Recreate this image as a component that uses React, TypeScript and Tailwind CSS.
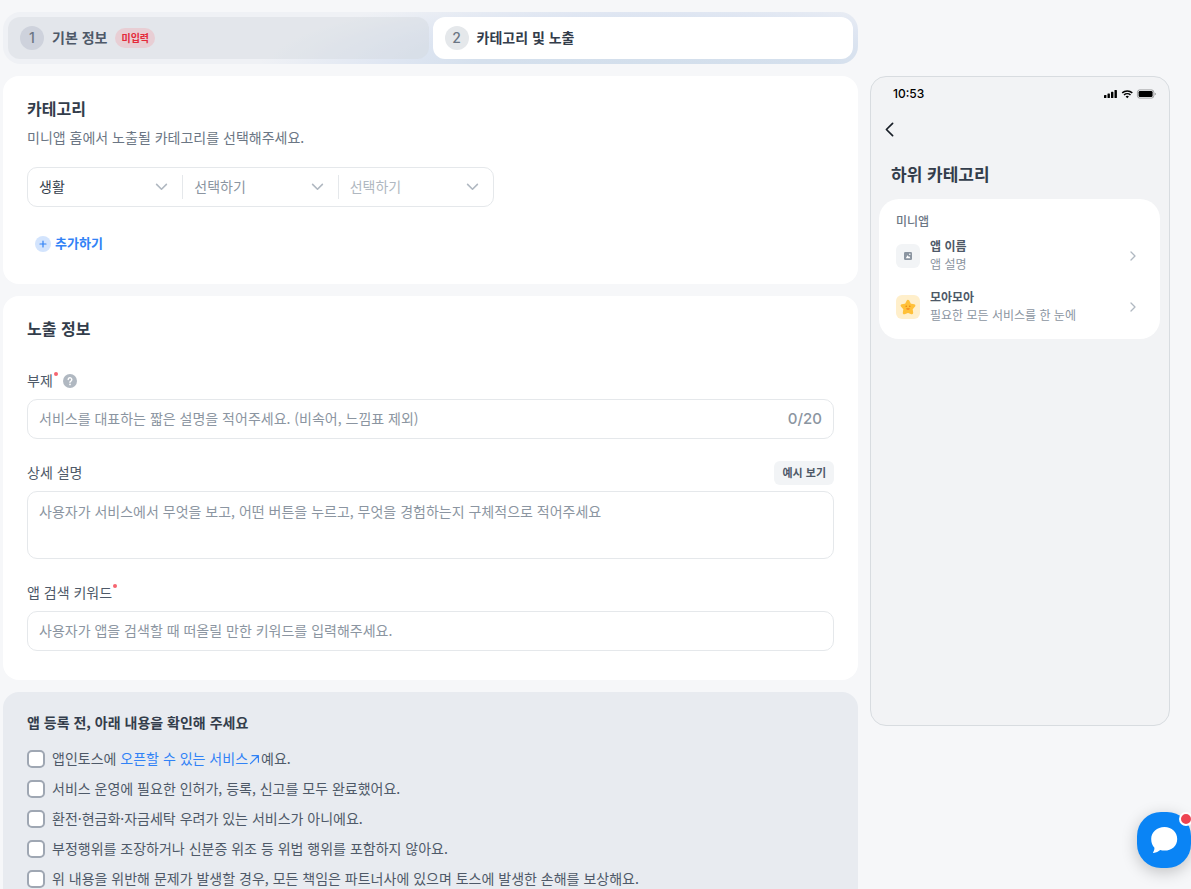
import React, { useState } from "react";

const CHECKS = [
  "서비스 운영에 필요한 인허가, 등록, 신고를 모두 완료했어요.",
  "환전·현금화·자금세탁 우려가 있는 서비스가 아니에요.",
  "부정행위를 조장하거나 신분증 위조 등 위법 행위를 포함하지 않아요.",
  "위 내용을 위반해 문제가 발생할 경우, 모든 책임은 파트너사에 있으며 토스에 발생한 손해를 보상해요.",
];

function StepTabs() {
  return (
    <nav className="flex gap-1 overflow-hidden rounded-[18px] bg-[#eff1f5] bg-[radial-gradient(ellipse_46%_150%_at_76%_105%,#d3dfec_0%,#d5e0ed_45%,#dfe6f2_68%,transparent_100%)] p-[5px]">
      <button type="button" className="flex h-[42px] flex-1 items-center gap-2 rounded-xl bg-[#d1d6db]/40 px-3">
        <span className="flex size-6 items-center justify-center rounded-full bg-[#ced2dc] font-[Inter] text-sm font-medium text-[#6b7684]">1</span>
        <span className="pb-[2px] text-sm font-bold text-[#4e5968]">기본 정보</span>
        <span className="rounded-full bg-[#e8ced4] px-[6px] text-[10px] leading-5 font-bold text-[#e42939]">미입력</span>
      </button>
      <button type="button" className="flex h-[42px] flex-1 items-center gap-2 rounded-xl bg-white px-3">
        <span className="flex size-6 items-center justify-center rounded-full bg-[#e5e8eb] font-[Inter] text-sm font-medium text-[#6b7684]">2</span>
        <span className="pb-[2px] text-sm font-bold text-[#333d4b]">카테고리 및 노출</span>
      </button>
    </nav>
  );
}

function CategorySelect({ label, options, disabled }: { label: string; options: string[]; disabled?: boolean }) {
  return (
    <div className="relative flex-1">
      <select
        aria-label={label}
        disabled={disabled}
        className={`h-[38px] w-full appearance-none bg-transparent px-[11px] pb-[2px] text-sm outline-none ${
          disabled ? "text-[#b0b8c1] opacity-100" : options[0] === "선택하기" ? "text-[#8b95a1]" : "text-[#333d4b]"
        }`}
      >
        {options.map((o) => (
          <option key={o}>{o}</option>
        ))}
      </select>
      <svg className="pointer-events-none absolute top-[15px] right-[14px]" width="13" height="8" viewBox="0 0 13 8" fill="none">
        <path d="M1.6 1.4 6.5 6.200l4.900-4.800" stroke="#b0b8c1" strokeWidth="1.6" strokeLinecap="round" strokeLinejoin="round" />
      </svg>
    </div>
  );
}

function CategoryCard() {
  return (
    <section className="rounded-2xl bg-white px-6 pt-5 pb-6">
      <h2 className="text-base leading-6 font-bold text-[#333d4b]">카테고리</h2>
      <p className="mt-[5px] text-sm leading-6 text-[#6b7684]">미니앱 홈에서 노출될 카테고리를 선택해주세요.</p>
      <div className="mt-[18px] flex w-[467px] max-w-full items-center rounded-[10px] border border-[#e5e8eb]">
        <CategorySelect label="대분류" options={["생활"]} />
        <span className="h-6 w-px bg-[#e5e8eb]" />
        <CategorySelect label="중분류" options={["선택하기"]} />
        <span className="h-6 w-px bg-[#e5e8eb]" />
        <CategorySelect label="소분류" options={["선택하기"]} disabled />
      </div>
      <button type="button" className="mt-[21px] flex h-8 items-center gap-1 px-2 text-[13px] font-bold text-[#3182f6]">
        <svg width="16" height="16" viewBox="0 0 16 16" fill="none">
          <circle cx="8" cy="8" r="8" fill="#d3e4fd" />
          <path d="M8 5v6M5 8h6" stroke="#3182f6" strokeWidth="1.2" strokeLinecap="round" />
        </svg>
        <span className="pb-[2px]">추가하기</span>
      </button>
    </section>
  );
}

function RequiredDot() {
  return <span className="mb-3 ml-px size-1 rounded-full bg-[#f66570]" />;
}

function ExposureCard() {
  const [subtitle, setSubtitle] = useState("");
  return (
    <section className="rounded-2xl bg-white px-6 pt-5 pb-[29px]">
      <h2 className="text-base leading-6 font-bold text-[#333d4b]">노출 정보</h2>

      <div className="mt-[29px] flex h-6 items-center">
        <label htmlFor="subtitle" className="flex items-center pb-[2px] text-sm text-[#4e5968]">
          부제
          <RequiredDot />
        </label>
        <button type="button" aria-label="부제 도움말" className="ml-[5px]">
          <svg width="14" height="14" viewBox="0 0 14 14" fill="none">
            <circle cx="7" cy="7" r="7" fill="#b0b8c1" />
            <path d="M5.2 5.5a1.8 1.8 0 1 1 2.7 1.6c-.6.3-.9.6-.9 1.1" stroke="#fff" strokeWidth="1.4" strokeLinecap="round" />
            <circle cx="7" cy="10.4" r=".85" fill="#fff" />
          </svg>
        </button>
      </div>
      <div className="mt-[6px] flex h-10 items-center rounded-[10px] border border-[#e5e8eb] px-[11px]">
        <input
          id="subtitle"
          maxLength={20}
          value={subtitle}
          onChange={(e) => setSubtitle(e.target.value)}
          placeholder="서비스를 대표하는 짧은 설명을 적어주세요. (비속어, 느낌표 제외)"
          className="min-w-0 flex-1 pb-[2px] text-sm text-[#333d4b] outline-none placeholder:text-[#8b95a1]"
        />
        <span className="font-[Inter] text-[15px] font-medium text-[#8b95a1]">{subtitle.length}/20</span>
      </div>

      <div className="mt-[22px] flex h-6 items-center justify-between">
        <label htmlFor="detail" className="pb-[2px] text-sm text-[#4e5968]">상세 설명</label>
        <button type="button" className="h-6 rounded-md bg-[#f2f4f6] px-2 pb-px text-[11px] font-bold text-[#4e5968]">예시 보기</button>
      </div>
      <textarea
        id="detail"
        placeholder="사용자가 서비스에서 무엇을 보고, 어떤 버튼을 누르고, 무엇을 경험하는지 구체적으로 적어주세요"
        className="mt-[6px] block h-[68px] w-full resize-none rounded-[10px] border border-[#e5e8eb] px-[11px] py-2 text-sm leading-[22px] text-[#333d4b] outline-none placeholder:text-[#8b95a1]"
      />

      <label htmlFor="keyword" className="mt-[22px] flex h-6 items-center pb-[2px] text-sm text-[#4e5968]">
        앱 검색 키워드
        <RequiredDot />
      </label>
      <input
        id="keyword"
        placeholder="사용자가 앱을 검색할 때 떠올릴 만한 키워드를 입력해주세요."
        className="mt-[6px] block h-10 w-full rounded-[10px] border border-[#e5e8eb] px-[11px] pb-[2px] text-sm text-[#333d4b] outline-none placeholder:text-[#8b95a1]"
      />
    </section>
  );
}

const boxClass =
  "size-[18px] shrink-0 appearance-none rounded-[5px] border-2 border-[#9fa7b3] bg-white checked:border-[#3182f6] checked:bg-[#3182f6]";

function ConfirmCard() {
  return (
    <section className="rounded-2xl bg-[#e8ebf0] px-6 pt-[18px] pb-6">
      <h2 className="text-sm leading-6 font-bold text-[#333d4b]">앱 등록 전, 아래 내용을 확인해 주세요</h2>
      <ul className="mt-[10px] text-sm text-[#4e5968]">
        <li className="flex h-[30px] items-center gap-[7px]">
          <input id="check-open" type="checkbox" className={boxClass} />
          <label htmlFor="check-open" className="pb-[2px]">
            앱인토스에{" "}
            <a href="#services" className="text-[#3182f6]">
              오픈할 수 있는 서비스
              <svg className="mx-px inline align-[-1px]" width="11" height="11" viewBox="0 0 11 11" fill="none">
                <path d="M1.5 9.7 9 2M3 1.7h6.4v6.5" stroke="#3182f6" strokeWidth="1.2" strokeLinecap="round" strokeLinejoin="round" />
              </svg>
            </a>
            예요.
          </label>
        </li>
        {CHECKS.map((text, i) => (
          <li key={text} className="flex h-[30px] items-center gap-[7px]">
            <input id={`check-${i}`} type="checkbox" className={boxClass} />
            <label htmlFor={`check-${i}`} className="pb-[2px]">{text}</label>
          </li>
        ))}
      </ul>
    </section>
  );
}

function StatusIcons() {
  return (
    <svg width="52" height="10" viewBox="0 0 52 10" fill="none">
      <rect x="0" y="6" width="2.4" height="3" rx=".6" fill="#000" />
      <rect x="3.5" y="4.5" width="2.400" height="4.5" rx=".6" fill="#000" />
      <rect x="7" y="2.800" width="2.4" height="6.2" rx=".6" fill="#000" />
      <rect x="10.5" y="1" width="2.400" height="8" rx=".6" fill="#000" />
      <path d="M18.2 3.900a7.4 7.4 0 0 1 10.1 0M20 6a4.8 4.8 0 0 1 6.5 0" stroke="#000" strokeWidth="1.5" />
      <path d="M21.6 7.500a2.5 2.5 0 0 1 3.3 0L23.250 9.200z" fill="#000" />
      <rect x="33.400" y=".9" width="16.400" height="8.200" rx="2.300" stroke="#000" strokeOpacity=".4" strokeWidth=".8" />
      <rect x="34.600" y="2" width="14" height="6" rx="1.300" fill="#000" />
      <path d="M50.800 3.800v2.400q.9-.4.9-1.200t-.9-1.200" fill="#000" fillOpacity=".5" />
    </svg>
  );
}

function AppRow({ icon, name, desc }: { icon: React.ReactNode; name: string; desc: string }) {
  return (
    <li className="flex items-center gap-[10px]">
      {icon}
      <div className="min-w-0 flex-1 pb-[2px] text-xs leading-[18px]">
        <p className="font-bold text-[#4e5968]">{name}</p>
        <p className="text-[#8b95a1]">{desc}</p>
      </div>
      <svg className="mr-2" width="6" height="10" viewBox="0 0 6 10" fill="none">
        <path d="m1 1 4 4-4 4" stroke="#b0b8c1" strokeWidth="1.3" strokeLinecap="round" strokeLinejoin="round" />
      </svg>
    </li>
  );
}

function PhonePreview() {
  return (
    <aside className="mt-16 aspect-[6/13] w-[300px] shrink-0 rounded-2xl border border-[#d8dce0] bg-[#f2f3f5] pr-[9px] pl-2">
      <div className="flex h-[34px] items-center justify-between pr-[4px] pl-[14px]">
        <span className="font-[Inter] text-xs font-medium text-black">10:53</span>
        <StatusIcons />
      </div>
      <button type="button" aria-label="뒤로" className="mt-[3px] flex h-[30px] items-center pl-[6px]">
        <svg width="9" height="15" viewBox="0 0 9 15" fill="none">
          <path d="M7.6 1.400 1.400 7.500l6.200 6.100" stroke="#191f28" strokeWidth="1.700" strokeLinecap="round" strokeLinejoin="round" />
        </svg>
      </button>
      <h3 className="mt-[18px] pl-3 text-[17px] leading-6 font-bold text-[#333d4b]">하위 카테고리</h3>
      <div className="mt-[13px] rounded-[20px] bg-white pt-[13px] pr-4 pb-[13px] pl-[17px]">
        <p className="text-xs leading-[18px] font-medium text-[#6b7684]">미니앱</p>
        <ul className="mt-[7px] flex flex-col gap-[13px]">
          <AppRow
            name="앱 이름"
            desc="앱 설명"
            icon={
              <svg width="24" height="24" viewBox="0 0 24 24" fill="none">
                <rect width="24" height="24" rx="6" fill="#f2f4f6" />
                <rect x="8" y="8" width="8" height="8" rx="1.2" fill="#8b95a1" />
                <path d="m9.800 14.200 1.700-2.900 1.200 1.500.6-.6 1.100 2z" fill="#fff" />
                <circle cx="13.800" cy="10.200" r=".8" fill="#fff" />
              </svg>
            }
          />
          <AppRow
            name="모아모아"
            desc="필요한 모든 서비스를 한 눈에"
            icon={
              <svg width="24" height="24" viewBox="0 0 24 24" fill="none">
                <rect width="24" height="24" rx="6" fill="#ffefcb" />
                <path
                  d="m12 6.200 1.900 3.700 4.100.7-2.800 3.100.6 4.200-3.800-1.500-3.800 1.500.6-4.200L6 10.600l4.100-.7z"
                  fill="#ffc038"
                  stroke="#ffc038"
                  strokeWidth="2.800"
                  strokeLinejoin="round"
                />
                <circle cx="10.200" cy="11.300" r=".7" fill="#e8780a" />
                <circle cx="13.800" cy="11.300" r=".7" fill="#e8780a" />
                <path d="M10.200 13.200h3.600a1.800 1.600 0 0 1-3.600 0" fill="#f5821f" />
              </svg>
            }
          />
        </ul>
      </div>
    </aside>
  );
}

function ChatButton() {
  return (
    <button
      type="button"
      aria-label="문의하기"
      className="fixed right-0 bottom-[21px] flex h-14 w-[54px] items-center justify-center rounded-[24px] bg-[#0a84f5] shadow-[0_4px_16px_rgba(0,0,0,0.22)]"
    >
      <svg width="28" height="28" viewBox="0 0 28 28" fill="#fff">
        <path d="M14.500 1C21.800 1 27.200 6 27.200 13S21.800 24.600 14.500 24.600c-1.600 0-3-.1-4.300-.5-1.800 1.500-4 2.700-6.500 2.900-.6 0-.8-.5-.4-1 .8-1 1.200-2.500 1.100-4.200C2.500 19.700 1.200 16.700 1.200 13 1.200 6 7 1 14.500 1z" />
      </svg>
      <span className="absolute top-0 -right-[2px] size-[14px] rounded-full border-2 border-white bg-[#ee4452]" />
    </button>
  );
}

export default function App() {
  return (
    <div
      lang="ko"
      className="h-screen overflow-y-auto bg-[#f6f7f9] font-['Noto_Sans_CJK_KR',sans-serif] [scrollbar-width:none]"
    >
      <div className="flex items-start gap-3 pt-3 pr-[21px] pl-[3px]">
        <main className="flex min-w-0 flex-1 flex-col gap-3">
          <StepTabs />
          <CategoryCard />
          <ExposureCard />
          <ConfirmCard />
        </main>
        <PhonePreview />
      </div>
      <ChatButton />
    </div>
  );
}
